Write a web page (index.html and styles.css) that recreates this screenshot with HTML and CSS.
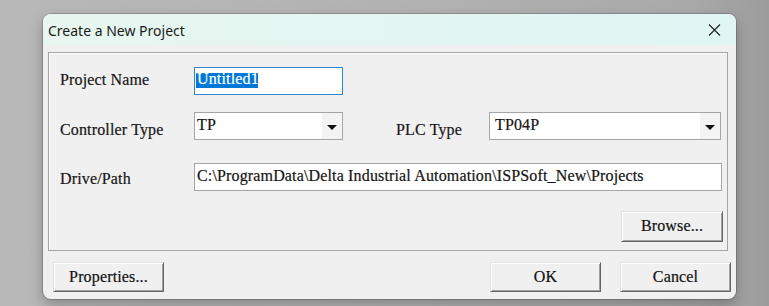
FILE: index.html
```html
<!DOCTYPE html>
<html>
<head>
<meta charset="utf-8">
<title>Create a New Project</title>
<link rel="stylesheet" href="styles.css">
</head>
<body>
<div class="dialog">
  <div class="titlebar">
    <span class="title">Create a New Project</span>
    <svg class="close" width="13" height="12" viewBox="0 0 13 12"><path d="M1 0.5 L12 11.5 M12 0.5 L1 11.5" stroke="#1f1f1f" stroke-width="1.1" fill="none"/></svg>
  </div>
  <div class="content">
    <div class="group">
      <div class="row row-name">
        <span class="label lbl-name">Project Name</span>
        <div class="field field-name"><span class="sel">Untitled1</span></div>
      </div>
      <div class="row row-type">
        <span class="label lbl-type">Controller Type</span>
        <div class="combo combo-ctrl"><span class="combo-text">TP</span><span class="arrow"></span></div>
        <span class="label lbl-plc">PLC Type</span>
        <div class="combo combo-plc"><span class="combo-text plc-text">TP04P</span><span class="arrow"></span></div>
      </div>
      <div class="row row-path">
        <span class="label lbl-path">Drive/Path</span>
        <div class="field field-path">C:\ProgramData\Delta Industrial Automation\ISPSoft_New\Projects</div>
      </div>
      <div class="row row-browse">
        <button class="btn btn-browse">Browse...</button>
      </div>
    </div>
    <div class="footer">
      <button class="btn">Properties...</button>
      <span class="spacer"></span>
      <button class="btn">OK</button>
      <button class="btn btn-cancel">Cancel</button>
    </div>
  </div>
</div>
</body>
</html>
```
FILE: styles.css
```css
html, body {
  margin: 0;
  padding: 0;
}
body {
  width: 769px;
  height: 306px;
  box-sizing: border-box;
  padding: 14px 0 0 43px;
  overflow: hidden;
  background: linear-gradient(to right, #b8b8b8 0%, #b2b2b2 55%, #a9a9a9 90%, #9c9c9c 100%);
  font-family: "Liberation Serif", "Times New Roman", serif;
  font-size: 16px;
  letter-spacing: 0.15px;
  color: #141414;
  -webkit-text-stroke: 0.2px currentColor;
}
.dialog {
  width: 693px;
  height: 285px;
  border-radius: 8px;
  background: #f0f0f0;
  box-shadow: 0 0 0 1px rgba(0,0,0,0.18), 0 6px 14px rgba(0,0,0,0.25);
  overflow: hidden;
  display: flex;
  flex-direction: column;
}
.titlebar {
  height: 31px;
  flex: none;
  display: flex;
  align-items: center;
  justify-content: space-between;
  padding: 0 15px 0 5px;
  background: linear-gradient(to right, #e7f7f0, #e0f6f4);
}
.title {
  font-family: "Noto Sans", "Open Sans", sans-serif;
  font-size: 14px;
  letter-spacing: 0;
  -webkit-text-stroke: 0;
  color: #1b1b1b;
  padding-top: 1px;
}
.close {
  display: block;
  margin-top: 1px;
}
.content {
  padding: 7px 8px 0 5px;
}
.group {
  height: 199px;
  box-sizing: border-box;
  border: 1px solid #a4a4a4;
  box-shadow: inset 1px 1px 0 #fbfbfb;
  padding: 14px 0 0 11px;
  display: flex;
  flex-direction: column;
}
.row {
  display: flex;
  align-items: flex-start;
  height: 28px;
}
.row-type { margin-top: 17px; }
.row-path { margin-top: 23px; }
.row-browse {
  margin-top: 20px;
  height: 31px;
  justify-content: flex-end;
  padding-right: 4px;
}
.label {
  line-height: 18px;
  white-space: nowrap;
  color: #161616;
}
.lbl-name, .lbl-type, .lbl-path { width: 134px; }
.lbl-name { margin-top: 4px; }
.lbl-type { margin-top: 9px; }
.lbl-plc { margin-top: 9px; margin-left: 53px; width: 93px; }
.lbl-path { margin-top: 7px; }
.field {
  height: 28px;
  box-sizing: border-box;
  background: #fff;
  border: 1px solid #a5a5a5;
  line-height: 18px;
  white-space: nowrap;
}
.field-name {
  width: 149px;
  border-color: #2f86d4;
  padding: 5px 0 0 1px;
}
.sel {
  display: block;
  width: 62px;
  height: 15px;
  line-height: 12px;
  padding-left: 1px;
  box-sizing: border-box;
  background: #0078d7;
  color: #fff;
  -webkit-text-stroke: 0.2px #fff;
}
.field-path {
  width: 528px;
  padding: 3px 0 0 2px;
  color: #141414;
}
.combo {
  height: 28px;
  box-sizing: border-box;
  background: #fff;
  border: 1px solid #a5a5a5;
  display: flex;
  justify-content: space-between;
  line-height: 18px;
}
.combo-ctrl { width: 149px; }
.combo-plc { width: 232px; }
.combo-text {
  padding: 3px 0 0 2px;
}
.plc-text { padding-left: 5px; }
.arrow {
  width: 20px;
  height: 26px;
  background: #f3f3f3;
  position: relative;
}
.arrow::after {
  content: "";
  position: absolute;
  left: 5px;
  top: 12px;
  border-left: 5px solid transparent;
  border-right: 5px solid transparent;
  border-top: 5px solid #111;
}
.btn {
  font-family: "Liberation Serif", "Times New Roman", serif;
  font-size: 16px;
  letter-spacing: 0.15px;
  -webkit-text-stroke: 0.2px #111;
  color: #111;
  width: 111px;
  height: 30px;
  box-sizing: border-box;
  margin: 0;
  padding: 0 0 1px 0;
  background: #f0f0f0;
  border: 1px solid;
  border-color: #e3e3e3 #646464 #646464 #e3e3e3;
  box-shadow: inset 1px 1px 0 #ffffff, inset -1px -1px 0 #a0a0a0;
  display: flex;
  align-items: center;
  justify-content: center;
}
.btn-browse {
  width: 102px;
  height: 31px;
}
.footer {
  display: flex;
  margin: 11px -3px 0 0;
  padding: 0 0 0 5px;
}
.spacer { flex: 1; }
.btn-cancel { margin-left: 19px; }
```
